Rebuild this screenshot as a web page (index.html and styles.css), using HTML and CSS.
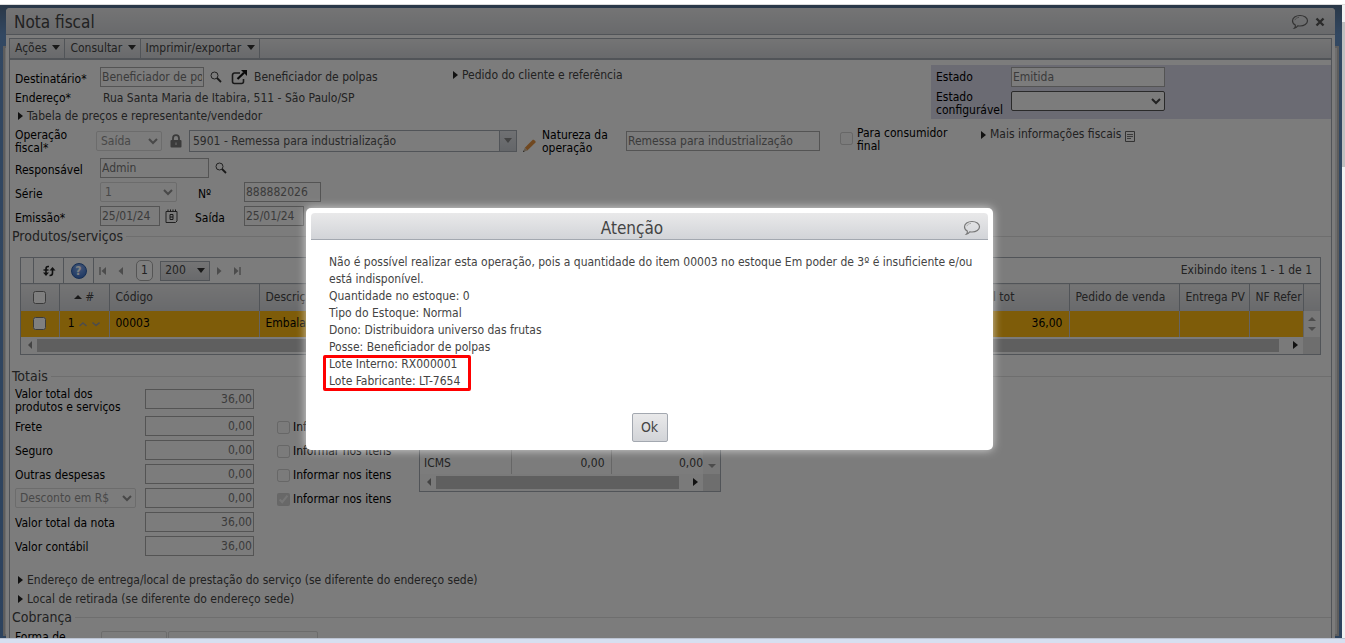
FILE: index.html
```html
<!DOCTYPE html>
<html lang="pt-BR">
<head>
  <meta charset="UTF-8">
  <meta name="viewport" content="width=device-width, initial-scale=1.0">
  <title>Nota fiscal</title>
  <link rel="stylesheet" href="styles.css">
</head>
<body>
  <div class="top-strip"></div>
  <div class="viewport">
    <div class="desktop">
      <div class="back-window"></div>

      <!-- Invoice window -->
      <main class="window">
        <header class="title-bar">
          <h1>Nota fiscal</h1>
          <a href="#" class="title-icon" aria-label="Comentários"><svg width="18" height="16" viewBox="0 0 18 16"><path d="M9 1.500c4.200 0 7.500 2.300 7.500 5.200S13.200 12 9 12c-.8 0-1.500-.1-2.200-.2-.7 1.200-1.700 2-3.300 2.300.8-.8 1-1.800.8-3C2.500 10.100 1.500 8.500 1.500 6.700 1.500 3.800 4.800 1.500 9 1.500z" fill="none" stroke="#666" stroke-width="1.200"/><path d="M3.800 6.200C4.300 4.600 6 3.600 8 3.400" fill="none" stroke="#999"/></svg></a>
          <a href="#" class="title-icon" aria-label="Fechar"><svg width="10" height="10" viewBox="0 0 10 10"><path d="M1.500 1.500l7 7M8.500 1.500l-7 7" stroke="#555" stroke-width="2.400"/></svg></a>
        </header>

        <div class="panel">
          <nav class="menu-bar">
            <button>Ações <i class="arrow-down"></i></button>
            <button>Consultar <i class="arrow-down"></i></button>
            <button>Imprimir/exportar <i class="arrow-down"></i></button>
          </nav>

          <section class="top">
            <div class="customer">
              <div class="row">
                <label class="label" for="dest">Destinatário*</label>
                <input class="field w-104" id="dest" type="text" value="Beneficiador de polpas">
                <svg class="icon search" width="12" height="12" viewBox="0 0 12 12"><circle cx="4.500" cy="4.500" r="3.500" fill="none" stroke="#444"/><path d="M7 7l4 4" stroke="#333" stroke-width="1.800"/></svg>
                <svg class="icon external" width="17" height="15" viewBox="0 0 17 15"><path d="M9 3H3.500a2 2 0 0 0-2 2v6.500a2 2 0 0 0 2 2h7a2 2 0 0 0 2-2V9" fill="none" stroke="#333" stroke-width="1.600"/><path d="M6.500 9L13 2.800" stroke="#111" stroke-width="2.200"/><path d="M10 0H16v6z" fill="#111"/></svg>
                <span class="value">Beneficiador de polpas</span>
              </div>
              <div class="row short">
                <span class="label">Endereço*</span>
                <span class="value address">Rua Santa Maria de Itabira, 511 - São Paulo/SP</span>
              </div>
              <a href="#" class="toggle">Tabela de preços e representante/vendedor</a>
            </div>
            <a href="#" class="toggle order">Pedido do cliente e referência</a>
            <div class="state">
              <label for="estado">Estado</label>
              <input class="field" id="estado" type="text" value="Emitida">
              <label for="estado-conf">Estado configurável</label>
              <select class="select" id="estado-conf"><option></option></select>
            </div>
          </section>

          <section class="fiscal">
            <label class="label two" for="operacao">Operação fiscal*</label>
            <select class="select w-66" disabled aria-label="Tipo"><option>Saída</option></select>
            <svg class="icon lock" width="12" height="14" viewBox="0 0 12 14"><path d="M3 7V4.200a3 3 0 0 1 6 0V7" fill="none" stroke="#777" stroke-width="1.800"/><rect x="0.500" y="6" width="11" height="7.500" rx="1" fill="#777"/><path d="M6 8.500v2.500" stroke="#bbb" stroke-width="1.500"/></svg>
            <div class="combo">
              <input id="operacao" type="text" value="5901 - Remessa para industrialização">
              <button aria-label="Abrir lista"><i class="arrow-down"></i></button>
            </div>
            <svg class="icon pencil" width="15" height="15" viewBox="0 0 15 15"><path d="M2.800 9.800L10.500 2c1-1 4 1.500 3 2.600L5.300 12.400z" fill="#e09040"/><path d="M2.800 9.800L1 14l4.300-1.600z" fill="#c9b59a"/><path d="M1 14l.7-1.500.8.900z" fill="#222"/></svg>
            <label class="label nature" for="natureza">Natureza da operação</label>
            <input class="field w-194" id="natureza" type="text" value="Remessa para industrialização">
            <input class="check consumer" id="consumidor" type="checkbox" disabled>
            <label class="label consumer-label" for="consumidor">Para consumidor final</label>
            <a href="#" class="toggle more">Mais informações fiscais</a>
            <svg class="icon doc" width="10" height="11" viewBox="0 0 10 11"><path d="M.5.500h9v10h-9z" fill="none" stroke="#666"/><path d="M2 3.500h6M2 5.500h6M2 7.500h4" stroke="#777"/></svg>
          </section>

          <div class="row">
            <label class="label" for="resp">Responsável</label>
            <input class="field w-109" id="resp" type="text" value="Admin">
            <svg class="icon search" width="12" height="12" viewBox="0 0 12 12"><circle cx="4.500" cy="4.500" r="3.500" fill="none" stroke="#444"/><path d="M7 7l4 4" stroke="#333" stroke-width="1.800"/></svg>
          </div>
          <div class="row">
            <label class="label" for="serie">Série</label>
            <select class="select w-77" id="serie" disabled><option>1</option></select>
            <label class="label middle" for="numero">Nº</label>
            <input class="field w-77" id="numero" type="text" value="888882026">
          </div>
          <div class="row">
            <label class="label" for="emissao">Emissão*</label>
            <input class="field w-60" id="emissao" type="text" value="25/01/24">
            <svg class="icon calendar" width="13" height="14" viewBox="0 0 13 14"><path d="M1 2.500h11v9.500l-1.500 1.500H1z" fill="none" stroke="#444"/><path d="M3 .500v2M5.500 .500v2M8 .500v2M10.500 .500v2" stroke="#333"/><path d="M5 5.500h3v5H5zM5 8h3" fill="none" stroke="#333"/></svg>
            <label class="label exit" for="saida">Saída</label>
            <input class="field w-60" id="saida" type="text" value="25/01/24">
          </div>

          <!-- Products -->
          <h2 class="legend">Produtos/serviços</h2>
          <div class="grid">
            <div class="grid-tools">
              <span class="tool blank"></span>
              <button class="tool refresh" aria-label="Atualizar"><svg width="14" height="12" viewBox="0 0 14 12"><path d="M7 1.500H6Q4 1.500 4 4v4" fill="none" stroke="#222" stroke-width="1.600"/><path d="M1.500 5h5" stroke="#222" stroke-width="1.400"/><path d="M1 7.500l3 3.500 3-3.500z" fill="#222"/><path d="M7.500 10.500h.500q2.500 0 2.500-2.500V5" fill="none" stroke="#222" stroke-width="1.600"/><path d="M7.500 5.500l3-3.500 3 3.500z" fill="#222"/></svg></button>
              <button class="tool help" aria-label="Ajuda"><span>?</span></button>
              <button class="page-nav" aria-label="Primeira"><svg width="8" height="8" viewBox="0 0 8 8"><path d="M1 0v8" stroke="#999" stroke-width="1.500"/><path d="M7 0v8L2.500 4z" fill="#999"/></svg></button>
              <button class="page-nav" aria-label="Anterior"><svg width="8" height="8" viewBox="0 0 8 8"><path d="M6 0v8L1.500 4z" fill="#999"/></svg></button>
              <button class="page-number">1</button>
              <button class="page-size">200 <i class="arrow-down"></i></button>
              <button class="page-nav" aria-label="Próxima"><svg width="8" height="8" viewBox="0 0 8 8"><path d="M2 0v8l4.500-4z" fill="#999"/></svg></button>
              <button class="page-nav" aria-label="Última"><svg width="8" height="8" viewBox="0 0 8 8"><path d="M7 0v8" stroke="#999" stroke-width="1.500"/><path d="M1 0v8l4.500-4z" fill="#999"/></svg></button>
              <span class="count">Exibindo itens 1 - 1 de 1</span>
            </div>
            <table class="items">
              <colgroup>
                <col class="c-check"><col class="c-num"><col class="c-code"><col><col class="c-total"><col class="c-order"><col class="c-delivery"><col class="c-ref"><col class="c-scroll">
              </colgroup>
              <thead>
                <tr>
                  <th class="center"><input class="check" type="checkbox" aria-label="Selecionar todos"></th>
                  <th class="center"><i class="arrow-up"></i> #</th>
                  <th>Código</th>
                  <th>Descrição</th>
                  <th>Vl tot</th>
                  <th>Pedido de venda</th>
                  <th>Entrega PV</th>
                  <th>NF Refer</th>
                  <th></th>
                </tr>
              </thead>
              <tbody>
                <tr>
                  <td class="center"><input class="check" type="checkbox" aria-label="Selecionar item 1"></td>
                  <td class="center">1 <svg width="22" height="6" viewBox="0 0 22 6"><path d="M1.500 5L5 2l3.500 3M14.500 1.500L18 4.500l3.500-3" fill="none" stroke="#999" stroke-width="1.600"/></svg></td>
                  <td>00003</td>
                  <td>Embalagem</td>
                  <td class="num">36,00</td>
                  <td></td>
                  <td></td>
                  <td></td>
                  <td class="v-scroll"><i class="arrow-up"></i><i class="arrow-down"></i></td>
                </tr>
              </tbody>
            </table>
            <div class="h-scroll">
              <i class="arrow-left"></i><span class="thumb"></span><i class="arrow-right"></i><span class="corner"></span>
            </div>
          </div>

          <!-- Totals -->
          <h2 class="legend totals-legend">Totais</h2>
          <section class="totals">
            <div class="amounts">
              <label for="t1">Valor total dos<br>produtos e serviços</label>
              <input class="field num" id="t1" type="text" value="36,00">
              <label for="t2">Frete</label>
              <input class="field num" id="t2" type="text" value="0,00">
              <label class="inform"><input class="check" type="checkbox" disabled>Informar nos itens</label>
              <label for="t3">Seguro</label>
              <input class="field num" id="t3" type="text" value="0,00">
              <label class="inform"><input class="check" type="checkbox" disabled>Informar nos itens</label>
              <label for="t4">Outras despesas</label>
              <input class="field num" id="t4" type="text" value="0,00">
              <label class="inform"><input class="check" type="checkbox" disabled>Informar nos itens</label>
              <select class="select discount" disabled aria-label="Desconto"><option>Desconto em R$</option></select>
              <input class="field num" type="text" value="0,00" aria-label="Valor do desconto">
              <label class="inform"><input class="check" type="checkbox" checked disabled>Informar nos itens</label>
              <label for="t6">Valor total da nota</label>
              <input class="field num" id="t6" type="text" value="36,00">
              <label for="t7">Valor contábil</label>
              <input class="field num" id="t7" type="text" value="36,00">
            </div>
            <div class="taxes">
              <table>
                <tbody>
                  <tr>
                    <td>ICMS</td>
                    <td class="num">0,00</td>
                    <td class="num">0,00</td>
                    <td class="v-scroll"><i class="arrow-down"></i></td>
                  </tr>
                </tbody>
              </table>
              <div class="h-scroll">
                <i class="arrow-left"></i><span class="thumb"></span><i class="arrow-right"></i><span class="corner"></span>
              </div>
            </div>
          </section>

          <section class="places">
            <a href="#" class="toggle">Endereço de entrega/local de prestação do serviço (se diferente do endereço sede)</a>
            <a href="#" class="toggle">Local de retirada (se diferente do endereço sede)</a>
          </section>

          <h2 class="legend">Cobrança</h2>
          <section class="billing">
            <label class="label two" for="forma">Forma de pagamento</label>
            <select class="select w-66" id="forma" disabled><option></option></select>
            <select class="select w-150" disabled aria-label="Condição"><option></option></select>
          </section>
        </div>
      </main>

      <div class="overlay"></div>

      <!-- Warning dialog -->
      <div class="dialog" role="alertdialog" aria-labelledby="dialog-title">
        <div class="dialog-title">
          <h2 id="dialog-title">Atenção</h2>
          <a href="#" class="title-icon" aria-label="Comentários"><svg width="18" height="16" viewBox="0 0 18 16"><path d="M9 1.500c4.200 0 7.500 2.300 7.500 5.200S13.200 12 9 12c-.8 0-1.500-.1-2.200-.2-.7 1.200-1.700 2-3.300 2.300.8-.8 1-1.800.8-3C2.500 10.100 1.500 8.500 1.500 6.700 1.500 3.800 4.800 1.500 9 1.500z" fill="none" stroke="#777" stroke-width="1.200"/><path d="M3.800 6.200C4.300 4.600 6 3.600 8 3.400" fill="none" stroke="#aaa"/></svg></a>
        </div>
        <div class="message">
          <p>Não é possível realizar esta operação, pois a quantidade do item 00003 no estoque Em poder de 3º é insuficiente e/ou está indisponível.</p>
          <p>Quantidade no estoque: 0</p>
          <p>Tipo do Estoque: Normal</p>
          <p>Dono: Distribuidora universo das frutas</p>
          <p>Posse: Beneficiador de polpas</p>
          <div class="highlight">
            <p>Lote Interno: RX000001</p>
            <p>Lote Fabricante: LT-7654</p>
          </div>
        </div>
        <button class="ok">Ok</button>
      </div>
    </div>
    <div class="scrollbar"></div>
  </div>
  <div class="bottom-strip"></div>
</body>
</html>
```

FILE: styles.css
```css
* {
  margin: 0;
  padding: 0;
  box-sizing: border-box;
}

body {
  display: flex;
  flex-direction: column;
  height: 100vh;
  overflow: hidden;
  background: #fff;
  color: #444;
  font-family: 'DejaVu Sans Condensed', 'DejaVu Sans', Verdana, sans-serif;
  font-size: 12px;
  line-height: 13px;
}

input, select, button {
  font: inherit;
  color: inherit;
}

a {
  color: inherit;
  text-decoration: none;
}

svg {
  flex: none;
}

.top-strip {
  height: 5px;
  flex: none;
  border-bottom: 1px solid #dcdcdc;
}

.viewport {
  display: flex;
  flex: 1;
  min-height: 0;
}

.scrollbar {
  width: 3px;
  background: linear-gradient(#f1f1f1 17px, #c1c1c1 17px, #c1c1c1 162px, #f1f1f1 162px);
}

.bottom-strip {
  height: 5px;
  flex: none;
  background: #d6dff0;
  border-top: 1px solid #bcc4d2;
}

.desktop {
  position: relative;
  flex: 1;
  min-width: 0;
  overflow: hidden;
  background: linear-gradient(#54708f, #6590c4 30px, #5b86bd);
}

.back-window {
  position: absolute;
  top: 41px;
  right: 3px;
  bottom: 2px;
  left: 3px;
  border: 2px solid #bbb;
  background: #ddd;
}

/* Main window */
.window {
  position: relative;
  display: flex;
  flex-direction: column;
  min-height: 100%;
  margin: 3px 7px 0 6px;
  padding: 0 3px;
  background: #f8f8f8;
  border-radius: 4px 4px 0 0;
}

.title-bar {
  display: flex;
  align-items: center;
  gap: 6px;
  height: 27px;
  margin: 0 -3px 3px;
  padding: 2px 10px 0 8px;
  border-bottom: 1px solid #a3a8b0;
  border-radius: 4px 4px 0 0;
  background: linear-gradient(#e9e9ea, #d2d4d8);
}

.title-bar h1 {
  flex: 1;
  font-size: 17px;
  font-weight: normal;
  line-height: 20px;
}

.title-icon {
  display: flex;
}

.panel {
  border: 1px solid #a3a8b0;
  border-bottom: 0;
}

.menu-bar {
  display: flex;
  height: 21px;
  border-bottom: 2px solid #a3a8b0;
  background: linear-gradient(#e9e9ea, #d2d4d8);
}

.menu-bar button {
  padding: 0 4px 0 5px;
  border: 0;
  border-right: 1px solid #a3a8b0;
  background: none;
}

.menu-bar .arrow-down {
  margin-left: 2px;
}

/* Arrows */
.arrow-down, .arrow-up, .arrow-left, .arrow-right {
  display: inline-block;
  border: 4px solid transparent;
}

.arrow-down {
  border-top: 5px solid #333;
  border-bottom: 0;
  margin-bottom: 2px;
}

.arrow-up {
  border-bottom: 4px solid #333;
  border-top: 0;
  margin-bottom: 2px;
}

.arrow-left {
  border-right: 4px solid #888;
  border-left: 0;
}

.arrow-right {
  border-left: 5px solid #222;
  border-right: 0;
}

/* Form parts */
.row {
  display: flex;
  align-items: center;
  height: 24px;
  padding-left: 5px;
}

.row.short {
  height: 18px;
}

.label, .state label, .amounts label {
  color: #000;
}

.label {
  flex: none;
  width: 85px;
}

.row .label {
  padding-top: 5px;
}

.row.short .label {
  padding-top: 0;
}

.field {
  flex: none;
  height: 20px;
  padding: 0 1px;
  border: 1px solid #a8a8a8;
  background: #f8f8f8;
  color: #777;
}

.select {
  flex: none;
  height: 20px;
  border: 1px solid #555;
  border-radius: 2px;
  background-color: #f8f8f8;
}

.select:disabled {
  border-color: #ccc;
  color: #666;
}

.check {
  flex: none;
  width: 13px;
  height: 13px;
}

.num {
  text-align: right;
}

.w-60 { width: 60px; }
.w-66 { width: 66px; }
.w-77 { width: 77px; }
.w-104 { width: 104px; }
.w-109 { width: 109px; }
.w-150 { width: 150px; }
.w-194 { width: 194px; }

.icon.search { margin-left: 6px; }
.icon.external { margin: 0 6px 0 9px; }
.icon.lock { margin: 0 7px 0 8px; }
.icon.pencil { margin: 8px 5px 0; }
.icon.calendar { margin-left: 5px; }
.icon.doc { margin-left: 4px; }

.row .label.middle {
  width: 67px;
  padding-left: 21px;
}

.row .label.exit {
  width: 66px;
  padding-left: 17px;
}

.address {
  padding-left: 3px;
}

.toggle {
  display: flex;
  align-items: center;
  height: 18px;
  padding-left: 8px;
  white-space: nowrap;
}

.toggle::before {
  content: '';
  margin-right: 4px;
  border: 4px solid transparent;
  border-left: 5px solid #222;
  border-right: 0;
}

/* Top area */
.top {
  display: flex;
  padding-top: 5px;
}

.customer {
  width: 435px;
}

.order {
  margin: 1px auto 0 0;
}

.state {
  display: grid;
  grid-template-columns: 71px 154px;
  grid-template-rows: 20px 26px;
  gap: 4px;
  align-items: center;
  width: 400px;
  height: 54px;
  padding: 2px 5px;
  background: #d6d6e6;
}

.state .select {
  align-self: start;
}

.fiscal {
  display: flex;
  align-items: center;
  height: 31px;
  padding: 1px 0 0 5px;
}

.fiscal .label {
  padding-top: 2px;
}

.fiscal .label.two {
  width: 81px;
  padding-right: 20px;
}

.combo {
  display: flex;
  width: 328px;
  height: 22px;
  border: 1px solid #a3a8b0;
}

.combo input {
  flex: 1;
  padding-left: 3px;
  border: 0;
  background: #f8f8f8;
  color: #555;
}

.combo button {
  width: 17px;
  border: 0;
  border-left: 1px solid #a3a8b0;
  background: linear-gradient(#e0e2e6, #c8ccd2);
}

.combo .arrow-down {
  border-top-color: #888;
}

.nature {
  width: 84px;
  padding-right: 8px;
}

.consumer {
  margin: 0 4px 6px 20px;
}

.fiscal .consumer-label {
  width: 116px;
  padding: 0 20px 2px 0;
}

.fiscal .more, .icon.doc {
  margin-bottom: 13px;
}

.fiscal .icon.doc {
  margin-bottom: 10px;
}

/* Section headings with a rule */
.legend {
  display: flex;
  align-items: center;
  gap: 3px;
  height: 16px;
  padding-left: 2px;
  font-size: 14px;
  font-weight: normal;
}

.legend::after {
  content: '';
  flex: 1;
  border-top: 1px solid #dcdcdc;
}

.totals-legend {
  margin-top: 14px;
}

/* Products grid */
.grid {
  margin: 13px 10px 0;
  border: 1px solid #a3a8b0;
}

.grid-tools {
  display: flex;
  align-items: center;
  height: 25px;
}

.grid-tools button {
  display: flex;
  align-items: center;
  justify-content: center;
  height: 100%;
  border: 0;
  background: none;
}

.grid-tools .tool {
  height: 100%;
  width: 30px;
  border-right: 1px solid #a3a8b0;
}

.grid-tools .blank {
  width: 13px;
}

.help span {
  width: 16px;
  height: 16px;
  border: 1px solid #2a5ca8;
  border-radius: 50%;
  background: radial-gradient(circle at 50% 30%, #88aef0, #2c62bc);
  color: #fff;
  font-weight: bold;
  line-height: 14px;
}

.grid-tools .page-nav {
  width: 18px;
}

.grid-tools .page-number {
  width: 17px;
  height: 21px;
  margin: 0 7px 0 6px;
  border: 1px solid #aaa;
  border-radius: 5px;
  background: #fff;
}

.grid-tools .page-size {
  gap: 11px;
  width: 50px;
  height: 20px;
  border: 1px solid #a3a8b0;
  background: linear-gradient(#e9e9ea, #d2d4d8);
}

.page-size .arrow-down {
  margin-bottom: 0;
}

.count {
  margin-left: auto;
  padding-right: 8px;
}

.items {
  width: 100%;
  table-layout: fixed;
  border-collapse: collapse;
  white-space: nowrap;
}

.c-check { width: 38px; }
.c-num { width: 50px; }
.c-code { width: 150px; }
.c-total { width: 90px; }
.c-order { width: 110px; }
.c-delivery { width: 70px; }
.c-ref { width: 54px; }
.c-scroll { width: 17px; }

.items th {
  height: 27px;
  padding-left: 6px;
  overflow: hidden;
  border: 1px solid #a3a8b0;
  border-width: 1px 1px 0 0;
  background: linear-gradient(#e9e9ea, #d2d4d8);
  font-weight: normal;
  text-align: left;
}

.items th:last-child {
  border-right: 0;
}

.items td {
  height: 26px;
  padding: 0 6px;
  border-right: 1px solid #c8c8c8;
  background: #fdb813;
  color: #000;
}

.items .center {
  padding: 0;
  text-align: center;
}

.items .check {
  vertical-align: middle;
}

.items .v-scroll, .taxes .v-scroll {
  padding: 0;
  border: 0;
  background: #f1f1f1;
}

.v-scroll i {
  display: block;
  width: 8px;
  margin: 6px auto;
}

.v-scroll .arrow-up { border-bottom-color: #999; }
.v-scroll .arrow-down { border-top: 4px solid #999; }

.h-scroll {
  display: flex;
  align-items: center;
  gap: 5px;
  height: 17px;
  padding-left: 7px;
  background: #f4f4f4;
}

.h-scroll .thumb {
  flex: 1;
  height: 13px;
  margin-right: 9px;
  background: #bebebe;
}

.corner {
  width: 17px;
  height: 17px;
  background: #dcdcdc;
}

/* Totals */
.totals {
  display: flex;
  align-items: flex-start;
  padding-left: 5px;
}

.amounts {
  display: grid;
  grid-template-columns: 130px 109px 142px;
  grid-template-rows: 29px;
  grid-auto-rows: 24px;
  align-items: center;
  width: 404px;
}

.amounts > label[for],
.amounts > select {
  grid-column: 1;
}

.amounts label {
  padding-top: 3px;
}

.amounts .inform {
  display: flex;
  align-items: center;
  gap: 3px;
  padding-left: 23px;
  white-space: nowrap;
}

.amounts .discount {
  width: 121px;
}

.taxes {
  width: 302px;
  margin-top: 14px;
  border: 1px solid #a3a8b0;
}

.taxes table {
  width: 100%;
  table-layout: fixed;
  border-collapse: collapse;
}

.taxes td {
  height: 74px;
  padding: 0 6px 4px 4px;
  border-right: 1px solid #ccc;
  vertical-align: bottom;
}

.taxes td:first-child {
  width: 91px;
}

.taxes td:nth-child(2) {
  width: 100px;
}

.taxes td:nth-child(3) {
  padding-right: 0;
  border: 0;
}

.taxes td:last-child {
  width: 17px;
}

.places {
  padding: 13px 0 1px;
}

.places .toggle {
  height: 19px;
}

.billing {
  display: flex;
  gap: 1px;
  padding: 5px 5px 0;
}

/* Overlay and dialog */
.overlay {
  position: absolute;
  inset: 0;
  background: rgba(0, 0, 0, 0.5);
}

.dialog {
  position: absolute;
  top: 203px;
  left: 306px;
  width: 687px;
  padding: 5px 5px 8px;
  border-radius: 5px;
  background: #fff;
  box-shadow: 0 0 10px rgba(255, 255, 255, 0.7);
}

.dialog-title {
  display: flex;
  align-items: center;
  height: 27px;
  padding: 3px 7px 0 0;
  border-bottom: 1px solid #a3a8b0;
  border-radius: 4px 4px 0 0;
  background: linear-gradient(#e9e9ea, #d2d4d8);
}

.dialog-title h2 {
  flex: 1;
  padding-right: 10px;
  font-size: 17px;
  font-weight: normal;
  line-height: 20px;
  text-align: center;
}

.message {
  padding: 14px 8px 0 18px;
  line-height: 17px;
}

.highlight {
  position: relative;
  width: fit-content;
}

.highlight::after {
  content: '';
  position: absolute;
  inset: -1px -11px -1px -6px;
  border: 3px solid #f00;
  border-radius: 2px;
}

.ok {
  display: block;
  width: 36px;
  height: 29px;
  margin: 23px auto 0;
  border: 1px solid #a3a8b0;
  border-radius: 2px;
  background: linear-gradient(#e9e9ea, #d2d4d8);
  font-size: 14px;
}
```
